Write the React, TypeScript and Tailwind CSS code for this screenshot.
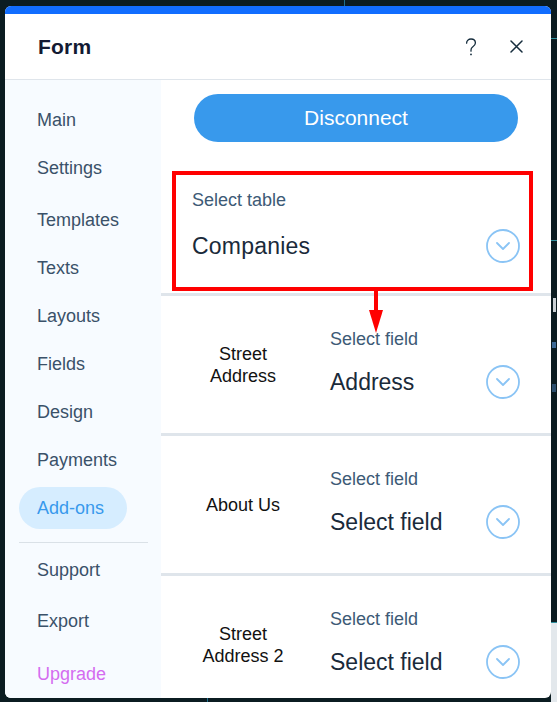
import React from "react";

const Chevron = () => (
  <svg width="34" height="34" viewBox="0 0 34 34" fill="none" className="shrink-0">
    <circle cx="17" cy="17" r="16" stroke="#8ac4f5" strokeWidth="1.8" />
    <path d="M11 14 L17 20 L23 14" stroke="#8ac4f5" strokeWidth="1.8" strokeLinecap="round" strokeLinejoin="round" />
  </svg>
);

const navTop = ["Main", "Settings"];
const navMid = ["Templates", "Texts", "Layouts", "Fields", "Design", "Payments"];

function Row({ label, value }: { label: React.ReactNode; value: string }) {
  return (
    <div className="flex h-[137px] shrink-0">
      <div className="w-[164px] flex items-center justify-center text-center text-[18px] leading-[22px] text-[#111]">
        {label}
      </div>
      <div className="flex-1 pl-[5px] pr-[31px] pt-[32px] flex flex-col">
        <div className="text-[18px] leading-[22px] text-[#3d5a76]">Select field</div>
        <div className="mt-[15px] flex items-center justify-between h-[34px] shrink-0">
          <span className="text-[23px] leading-[28px] text-[#1a2a3a]">{value}</span>
          <Chevron />
        </div>
      </div>
    </div>
  );
}

export default function App() {
  return (
    <div className="relative w-[557px] h-[702px] bg-[#0b1c21] overflow-hidden pt-[6px] pl-[5px] font-['Liberation_Sans',Arial,sans-serif]">
      {/* background canvas fragments */}
      <div className="absolute left-[344px] top-0 w-px h-[6px] bg-[#1f6f8f]" />
      <div className="absolute left-[207px] top-[698px] w-px h-[4px] bg-[#1f6f8f]" />
      <div className="absolute left-[551px] top-[38px] w-[6px] h-px bg-[#2f8f9c]" />
      <div className="absolute left-[551px] top-[240px] w-[6px] h-px bg-[#2f8f9c]" />
      <div className="absolute left-[553px] top-[298px] w-[3px] h-[14px] bg-[#c9d0d4]" />
      <div className="absolute left-[552px] top-[342px] w-[4px] h-[6px] bg-[#3d6a96]" />
      <div className="absolute left-[552px] top-[384px] w-[4px] h-[8px] bg-[#2c4f6e]" />
      <div className="absolute left-[551px] top-[622px] w-[6px] h-px bg-[#2f8f9c]" />
      <div className="absolute left-[551px] top-[623px] w-[6px] h-[79px] bg-[#e3e8ec]" />

      <div className="relative w-[546px] h-[692px] rounded-[6px] overflow-hidden bg-white flex flex-col">
        <div className="h-[8px] bg-[#116dff] shrink-0" />
        <div className="h-[66px] shrink-0 border-b border-[#dfe5eb] flex items-center pl-[33px] pr-[28px]">
          <span className="text-[21px] font-bold text-[#131a33] tracking-[0.2px]">Form</span>
          <div className="ml-auto flex items-center gap-[33px]">
            <svg width="12" height="18" viewBox="0 0 12 18" fill="none" className="ml-[2px]">
              <path d="M1.6 5.2 C1.6 2.6 3.5 1 6 1 C8.6 1 10.4 2.7 10.4 5 C10.4 7 9 8 7.6 9 C6.5 9.8 6 10.6 6 12 V13.2" stroke="#162d3d" strokeWidth="1.3" strokeLinecap="round" />
              <circle cx="6" cy="16.4" r="0.9" fill="#162d3d" />
            </svg>
            <svg width="13" height="13" viewBox="0 0 13 13" fill="none">
              <path d="M1 1 L12 12 M12 1 L1 12" stroke="#162d3d" strokeWidth="1.5" strokeLinecap="round" />
            </svg>
          </div>
        </div>

        <div className="flex flex-1 min-h-0">
          {/* sidebar */}
          <div className="w-[156px] shrink-0 bg-[#f7fbff] pt-[16px] flex flex-col overflow-hidden text-[18px] text-[#3a5169]">
            {navTop.map((n) => (
              <div key={n} className="h-[48px] shrink-0 flex items-center pl-[32px]">{n}</div>
            ))}
            <div className="h-[4px] shrink-0" />
            {navMid.map((n) => (
              <div key={n} className="h-[48px] shrink-0 flex items-center pl-[32px]">{n}</div>
            ))}
            <div className="h-[48px] shrink-0 flex items-center">
              <div className="ml-[14px] w-[108px] h-[42px] rounded-full bg-[#d6edff] flex items-center pl-[18px] text-[#3899ec]">
                Add-ons
              </div>
            </div>
            <div className="mt-[10px] ml-[14px] w-[129px] h-px shrink-0 bg-[#dae1e7]" />
            <div className="h-[52px] shrink-0 flex items-center pl-[32px] pt-[2px]">Support</div>
            <div className="h-[52px] shrink-0 flex items-center pl-[32px]">Export</div>
            <div className="h-[52px] shrink-0 flex items-center pl-[32px] pt-[2px] text-[#d46cf0]">Upgrade</div>
          </div>

          {/* content */}
          <div className="relative flex-1 flex flex-col overflow-hidden">
            <div className="pt-[14px] px-[33px] shrink-0">
              <button className="w-full h-[48px] rounded-full bg-[#3899ec] text-white text-[21px]">
                Disconnect
              </button>
            </div>
            <div className="mt-[29px] ml-[11px] mr-[18px] h-[120px] shrink-0 border-4 border-[#ff0000] pt-[14px] pl-[16px] pr-[9px]">
              <div className="text-[18px] leading-[22px] text-[#3d5a76]">Select table</div>
              <div className="mt-[18px] flex items-center justify-between h-[34px]">
                <span className="text-[23px] leading-[28px] text-[#1a2a3a] tracking-[0.2px]">Companies</span>
                <Chevron />
              </div>
            </div>
            <div className="mt-[2px] h-[3px] shrink-0 bg-[#dfe5eb]" />
            <Row label={<>Street<br />Address</>} value="Address" />
            <div className="h-[3px] shrink-0 bg-[#dfe5eb]" />
            <Row label="About Us" value="Select field" />
            <div className="h-[3px] shrink-0 bg-[#dfe5eb]" />
            <Row label={<>Street<br />Address 2</>} value="Select field" />

            {/* annotation arrow */}
            <svg className="absolute left-[208px] top-[211px]" width="14" height="43" viewBox="0 0 14 43">
              <rect x="5" y="0" width="4" height="22" fill="#ff0000" />
              <polygon points="0,19 14,19 7,42" fill="#ff0000" />
            </svg>
          </div>
        </div>
      </div>
    </div>
  );
}
